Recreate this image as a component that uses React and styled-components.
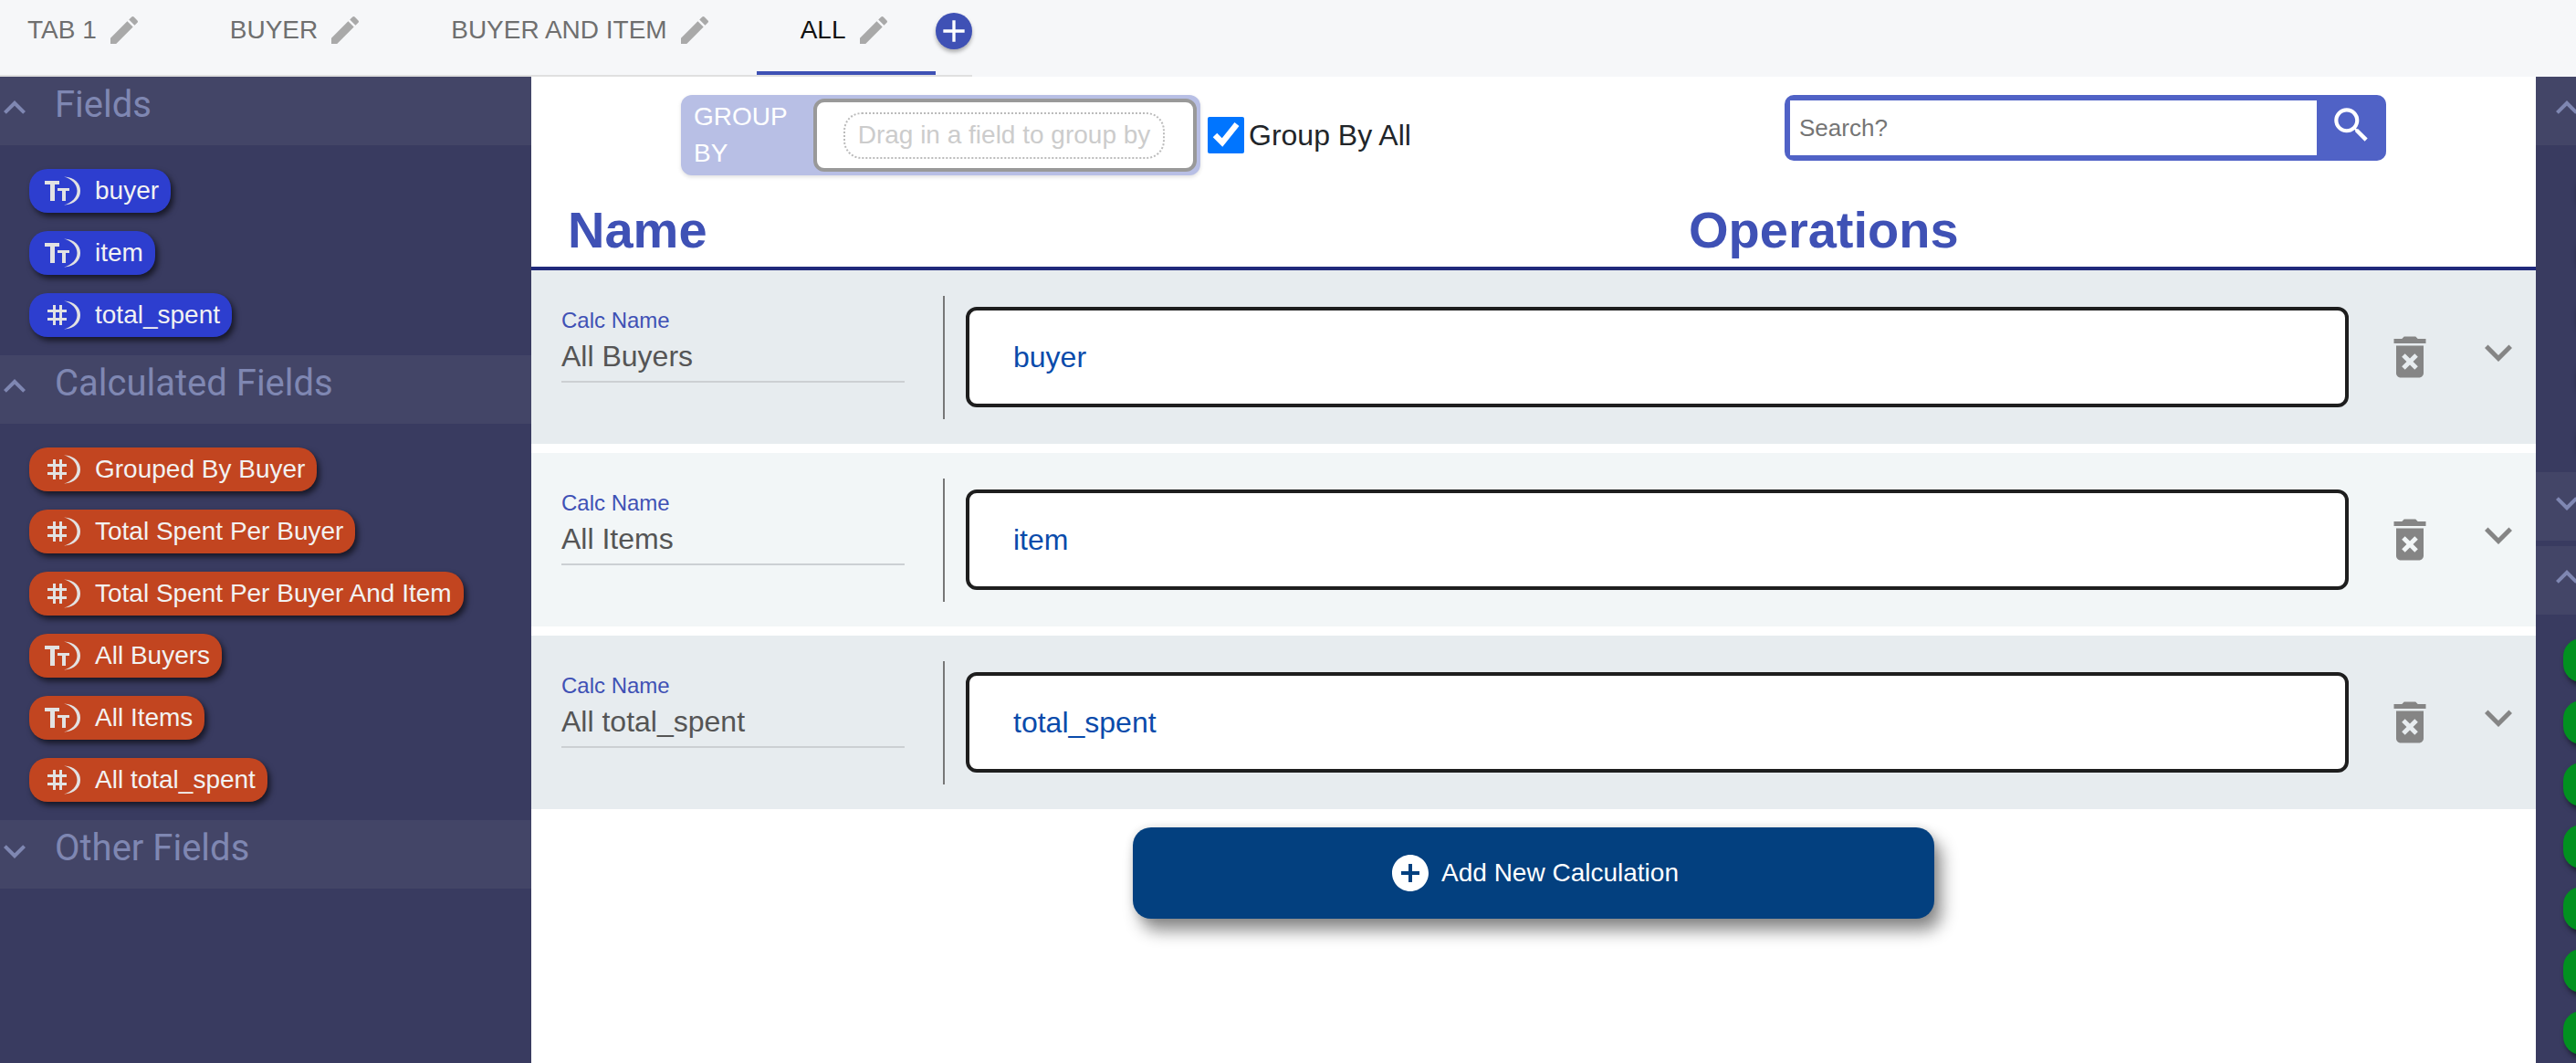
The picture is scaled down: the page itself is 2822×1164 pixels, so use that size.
import React from 'react'
import styled, { createGlobalStyle } from 'styled-components'
import {
  MdAdd,
  MdAddCircle,
  MdDeleteForever,
  MdEdit,
  MdExpandLess,
  MdExpandMore,
  MdSearch,
} from 'react-icons/md'

const GlobalStyle = createGlobalStyle`
  * { box-sizing: border-box; }
  html, body { margin: 0; padding: 0; background: #fff; }
  body { font-family: "Liberation Sans", Arial, sans-serif; }
`

const Page = styled.div`
  width: 2822px;
  height: 1164px;
  display: flex;
  flex-direction: column;
  overflow: hidden;
`

/* tabs */
const TabBar = styled.div`
  height: 84px;
  flex: none;
  background: #f6f7f9;
`
const TabStrip = styled.div`
  width: 1065px;
  height: 84px;
  display: flex;
  align-items: flex-start;
  border-bottom: 2px solid #e0e0e0;
`
const Tab = styled.div`
  height: 82px;
  display: flex;
  align-items: center;
  gap: 10px;
  padding: 0 48px 12px ${(props) => (props.$first ? '30px' : '48px')};
  border-bottom: 4px solid ${(props) => (props.$active ? '#3f51b5' : 'transparent')};
  color: ${(props) => (props.$active ? '#111' : '#6f6f6f')};
  font-size: 28px;
  white-space: nowrap;
  svg { color: #a9a9a9; flex: none; }
`
const AddTab = styled.div`
  width: 40px;
  height: 40px;
  margin-top: 14px;
  flex: none;
  display: flex;
  align-items: center;
  justify-content: center;
  border-radius: 50%;
  background: #3f51b5;
  color: #fff;
  box-shadow: 0 3px 4px rgba(0, 0, 0, 0.3);
`

/* side panels */
const Workspace = styled.div`
  flex: 1;
  display: flex;
  min-height: 0;
`
const SidePanel = styled.aside`
  width: ${(props) => props.$width}px;
  flex: none;
  background: #393b60;
  overflow: hidden;
`
const SectionHeader = styled.div`
  height: 75px;
  display: flex;
  align-items: flex-start;
  gap: 20px;
  padding-left: ${(props) => props.$inset || 0}px;
  background: #434567;
  color: #7f87b2;
  svg { margin: 10px 0 0 -8px; flex: none; }
`
const SectionTitle = styled.div`
  font-family: Roboto, sans-serif;
  font-size: 40px;
  line-height: 47px;
  margin-top: 7px;
  white-space: nowrap;
`
const SectionBody = styled.div`
  padding: 26px 0 0 ${(props) => props.$indent}px;
  height: ${(props) => (props.$height ? `${props.$height}px` : 'auto')};
  overflow: ${(props) => (props.$height ? 'hidden' : 'visible')};
`
const SectionGap = styled.div`
  height: 6px;
`
const Pill = styled.div`
  width: max-content;
  height: 48px;
  margin-bottom: 20px;
  display: flex;
  align-items: center;
  gap: 15px;
  padding: 0 13px 0 17px;
  border-radius: 20px;
  background: ${(props) => props.$color};
  box-shadow: 3px 4px 6px rgba(0, 0, 0, 0.6);
  color: #f2f2f2;
  font-size: 28px;
  white-space: nowrap;
`
/* the far right panel only shows the rounded left end of its pills */
const PillStub = styled(Pill)`
  width: 120px;
`

const TypeIcon = ({ type }) => (
  <svg width="40" height="32" viewBox="0 0 40 32" fill="#e2e2e2">
    {type === 'text' ? (
      <>
        <rect x="0" y="5" width="16" height="4" />
        <rect x="6" y="5" width="5" height="22" />
        <rect x="14" y="13" width="13" height="3" />
        <rect x="19" y="13" width="4" height="14" />
      </>
    ) : (
      <>
        <rect x="3" y="10" width="21" height="3" />
        <rect x="3" y="19" width="21" height="3" />
        <rect x="9" y="5" width="3" height="22" />
        <rect x="16" y="5" width="3" height="22" />
      </>
    )}
    <path d="M21 0.5C33 1 39 8 39 16s-6 15-18 15.5C30 29 35.5 23 35.5 16S30 3 21 0.5z" />
  </svg>
)

/* centre */
const Main = styled.main`
  flex: 1;
  min-width: 0;
  display: flex;
  flex-direction: column;
`
const Toolbar = styled.div`
  display: flex;
  align-items: flex-start;
  justify-content: space-between;
  padding: 20px 164px 0;
`
const GroupArea = styled.div`
  display: flex;
  align-items: center;
  gap: 8px;
`
const GroupBox = styled.div`
  width: 569px;
  height: 88px;
  display: flex;
  align-items: center;
  justify-content: space-between;
  padding: 0 4px 0 14px;
  border-radius: 12px;
  background: #b8bfe5;
  box-shadow: 0 2px 4px rgba(0, 0, 0, 0.12);
`
const GroupLabel = styled.div`
  width: 110px;
  color: #fff;
  font-size: 28px;
  line-height: 40px;
`
const DropZone = styled.div`
  width: 420px;
  height: 80px;
  display: flex;
  align-items: center;
  padding-left: 29px;
  border: 4px solid #999;
  border-radius: 12px;
  background: #fff;
`
const DropHint = styled.div`
  width: 352px;
  height: 51px;
  display: flex;
  align-items: center;
  justify-content: center;
  border: 2px dotted #bbb;
  border-radius: 20px;
  color: #ccc;
  font-size: 28px;
  white-space: nowrap;
`
const AllCheck = styled.label`
  display: flex;
  align-items: center;
  gap: 5px;
  color: #212529;
  font-size: 32px;
  input { width: 40px; height: 40px; margin: 0; }
`
const SearchBox = styled.div`
  width: 659px;
  height: 72px;
  display: flex;
  border: 6px solid #5062c6;
  border-right: none;
  border-radius: 10px;
  background: #5062c6;
`
const SearchInput = styled.input`
  flex: 1;
  min-width: 0;
  border: none;
  outline: none;
  padding: 0 10px;
  background: #fff;
  color: #333;
  font-family: inherit;
  font-size: 26px;
  &::placeholder { color: #757575; opacity: 1; }
`
const SearchButton = styled.div`
  width: 76px;
  flex: none;
  display: flex;
  align-items: center;
  justify-content: center;
  padding-bottom: 6px;
  color: #fff;
`
const ColumnHeads = styled.div`
  height: 104px;
  display: flex;
  align-items: flex-end;
  padding: 0 0 8px 40px;
  border-bottom: 4px solid #20297b;
  color: #3f51b5;
  font-size: 56px;
  font-weight: 700;
  line-height: 64px;
`
const NameHead = styled.div`
  width: 1228px;
  flex: none;
`
const CalcRow = styled.div`
  height: 190px;
  margin-bottom: 10px;
  display: flex;
  align-items: flex-start;
  padding-left: 33px;
  background: ${(props) => (props.$alt ? '#f2f6f7' : '#e7ecef')};
`
const NameCell = styled.div`
  width: 376px;
  flex: none;
  margin-top: 41px;
  padding-bottom: 9px;
  border-bottom: 2px solid #ccd0d3;
`
const NameLabel = styled.div`
  color: #3f51b5;
  font-size: 24px;
  line-height: 28px;
`
const NameValue = styled.div`
  margin-top: 7px;
  color: #555;
  font-size: 32px;
  line-height: 36px;
`
const Divider = styled.div`
  width: 2px;
  height: 135px;
  flex: none;
  margin: 28px 23px 0 42px;
  background: #777;
`
const OperationBox = styled.div`
  flex: 1;
  min-width: 0;
  height: 110px;
  margin-top: 40px;
  display: flex;
  align-items: center;
  padding-left: 48px;
  border: 4px solid #1e1e1e;
  border-radius: 12px;
  background: #fff;
  color: #0a4bab;
  font-size: 32px;
`
const RowIcon = styled.div`
  width: 60px;
  height: 60px;
  flex: none;
  margin: ${(props) => props.$top}px ${(props) => props.$right}px 0 ${(props) => props.$left}px;
  color: #858585;
  svg { display: block; }
`
const AddRow = styled.div`
  display: flex;
  justify-content: center;
  padding-top: 10px;
`
const AddButton = styled.div`
  width: 878px;
  height: 100px;
  display: flex;
  align-items: center;
  justify-content: center;
  gap: 14px;
  padding-left: 4px;
  border-radius: 20px;
  background: #03407f;
  box-shadow: 8px 13px 18px rgba(0, 0, 0, 0.45), 0 0 10px rgba(0, 0, 0, 0.12);
  color: #fff;
  font-size: 28px;
  svg { margin: 0 -4px; }
`

const tabs = ['TAB 1', 'BUYER', 'BUYER AND ITEM', 'ALL']

const fields = [
  { type: 'text', name: 'buyer' },
  { type: 'text', name: 'item' },
  { type: 'number', name: 'total_spent' },
]

const calculatedFields = [
  { type: 'number', name: 'Grouped By Buyer' },
  { type: 'number', name: 'Total Spent Per Buyer' },
  { type: 'number', name: 'Total Spent Per Buyer And Item' },
  { type: 'text', name: 'All Buyers' },
  { type: 'text', name: 'All Items' },
  { type: 'number', name: 'All total_spent' },
]

const calculations = [
  { name: 'All Buyers', field: 'buyer' },
  { name: 'All Items', field: 'item' },
  { name: 'All total_spent', field: 'total_spent' },
]

const Section = ({ title, open, inset }) => (
  <SectionHeader $inset={inset}>
    {open ? <MdExpandLess size={48} /> : <MdExpandMore size={48} />}
    {title && <SectionTitle>{title}</SectionTitle>}
  </SectionHeader>
)

const PillList = ({ items, color }) =>
  items.map((item, i) => (
    <Pill key={i} $color={color}>
      <TypeIcon type={item.type} />
      {item.name}
    </Pill>
  ))

const StubList = ({ count, color }) =>
  Array.from({ length: count }, (_, i) => <PillStub key={i} $color={color} />)

const App = () => (
  <Page>
    <GlobalStyle />
    <TabBar>
      <TabStrip>
        {tabs.map((tab, i) => (
          <Tab key={tab} $first={i === 0} $active={tab === 'ALL'}>
            {tab}
            <MdEdit size={40} />
          </Tab>
        ))}
        <AddTab>
          <MdAdd size={44} />
        </AddTab>
      </TabStrip>
    </TabBar>
    <Workspace>
      <SidePanel $width={582}>
        <Section title="Fields" open />
        <SectionBody $indent={32}>
          <PillList items={fields} color="#2d3ecf" />
        </SectionBody>
        <Section title="Calculated Fields" open />
        <SectionBody $indent={32}>
          <PillList items={calculatedFields} color="#c24520" />
        </SectionBody>
        <Section title="Other Fields" />
      </SidePanel>
      <Main>
        <Toolbar>
          <GroupArea>
            <GroupBox>
              <GroupLabel>GROUP BY</GroupLabel>
              <DropZone>
                <DropHint>Drag in a field to group by</DropHint>
              </DropZone>
            </GroupBox>
            <AllCheck>
              <input type="checkbox" defaultChecked />
              Group By All
            </AllCheck>
          </GroupArea>
          <SearchBox>
            <SearchInput placeholder="Search?" />
            <SearchButton>
              <MdSearch size={50} />
            </SearchButton>
          </SearchBox>
        </Toolbar>
        <ColumnHeads>
          <NameHead>Name</NameHead>
          <div>Operations</div>
        </ColumnHeads>
        {calculations.map((calc, i) => (
          <CalcRow key={calc.name} $alt={i === 1}>
            <NameCell>
              <NameLabel>Calc Name</NameLabel>
              <NameValue>{calc.name}</NameValue>
            </NameCell>
            <Divider />
            <OperationBox>{calc.field}</OperationBox>
            <RowIcon $top={65} $left={37} $right={0}>
              <MdDeleteForever size={60} />
            </RowIcon>
            <RowIcon $top={60} $left={37} $right={11}>
              <MdExpandMore size={60} />
            </RowIcon>
          </CalcRow>
        ))}
        <AddRow>
          <AddButton>
            <MdAddCircle size={48} />
            Add New Calculation
          </AddButton>
        </AddRow>
      </Main>
      <SidePanel $width={44}>
        <Section open inset={18} />
        <SectionBody $indent={44} $height={358}>
          <StubList count={5} color="#2d3ecf" />
        </SectionBody>
        <Section inset={18} />
        <SectionGap />
        <Section open inset={18} />
        <SectionBody $indent={30}>
          <StubList count={7} color="#029120" />
        </SectionBody>
      </SidePanel>
    </Workspace>
  </Page>
)

export default App
